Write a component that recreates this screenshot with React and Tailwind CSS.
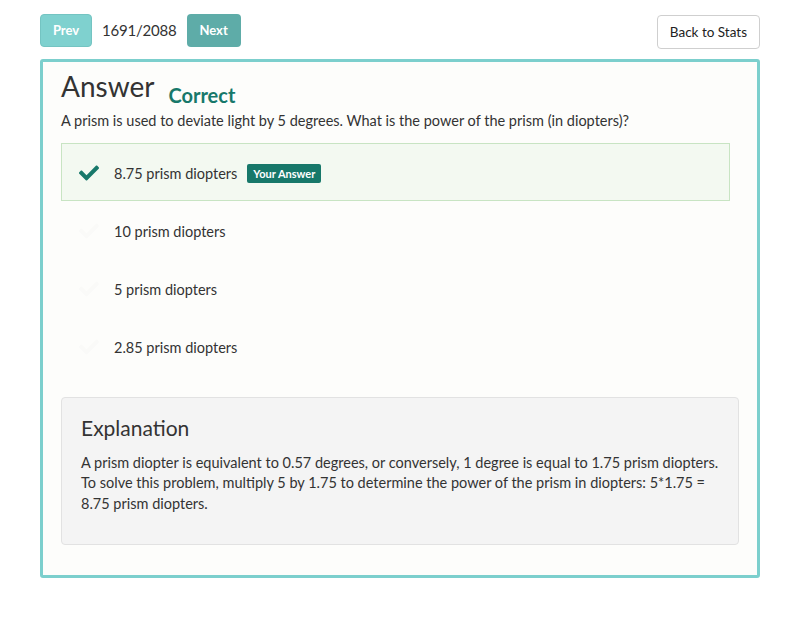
import React from "react";
import { FaCheck } from "react-icons/fa";

const options = [
  { text: "8.75 prism diopters", selected: true },
  { text: "10 prism diopters" },
  { text: "5 prism diopters" },
  { text: "2.85 prism diopters" },
];

function Option({ text, selected }) {
  return (
    <div
      className={
        "flex items-center h-[58px] pl-[17px] pt-[4px] border " +
        (selected ? "bg-[#f3f9f1] border-[#c8e4c3]" : "border-transparent")
      }
    >
      <FaCheck
        className={
          "w-[20px] h-[20px] mt-[-2px] " + (selected ? "text-[#17786a]" : "text-[#fafaf8]")
        }
      />
      <span className="ml-[15px] text-[14.5px] text-[#333]">{text}</span>
      {selected && (
        <span className="ml-[10px] bg-[#17786a] text-white text-[11px] font-bold rounded-[2px] px-[6px] h-[19px] leading-[19px]">
          Your Answer
        </span>
      )}
    </div>
  );
}

export default function App() {
  return (
    <div
      className="w-[800px] h-[620px] bg-white px-10 pt-[14px]"
      style={{ fontFamily: "Lato, 'Open Sans', sans-serif" }}
    >
      {/* top nav */}
      <div className="flex justify-between items-start">
        <div className="flex items-center">
          <button className="w-[52px] h-[33px] bg-[#7fd1cf] border border-[#74c4c2] rounded-[4px] text-white text-[13px] font-bold">
            Prev
          </button>
          <span className="ml-[10px] text-[15px] text-[#333] tracking-[-0.2px]">1691/2088</span>
          <button className="ml-[10px] w-[54px] h-[33px] bg-[#5eaca8] rounded-[4px] text-white text-[13px] font-bold">
            Next
          </button>
        </div>
        <button className="mt-px h-[34px] px-[12px] bg-white border border-[#cfcfcf] rounded-[4px] text-[13.5px] text-[#222]">
          Back to Stats
        </button>
      </div>

      {/* answer card */}
      <div className="mt-[10px] border-[3px] border-[#7ccfcd] rounded-[3px] bg-[#fdfdfb] px-[18px] pt-[5px] pb-[30px]">
        <div className="flex items-end">
          <h2 className="text-[28px] leading-[38px] text-[#333]">Answer</h2>
          <span className="ml-[14px] mb-[-5px] text-[20px] leading-[30px] font-bold text-[#17786a]">
            Correct
          </span>
        </div>
        <p className="mt-[5px] text-[14.5px] text-[#333]">
          A prism is used to deviate light by 5 degrees. What is the power of the prism (in diopters)?
        </p>

        <div className="mt-[11px] mr-[9px]">
          {options.map((o) => (
            <Option key={o.text} {...o} />
          ))}
        </div>

        {/* explanation */}
        <div className="mt-[22px] bg-[#f4f4f4] border border-[#e2e2e2] rounded-[4px] px-[19px] pt-[15px] pb-[30px]">
          <h3 className="text-[21px] leading-[30px] text-[#333]">Explanation</h3>
          <p className="mt-[10px] text-[14.5px] leading-[20.5px] text-[#333]">
            A prism diopter is equivalent to 0.57 degrees, or conversely, 1 degree is equal to 1.75 prism diopters.
            To solve this problem, multiply 5 by 1.75 to determine the power of the prism in diopters: 5*1.75 =
            8.75 prism diopters.
          </p>
        </div>
      </div>
    </div>
  );
}
